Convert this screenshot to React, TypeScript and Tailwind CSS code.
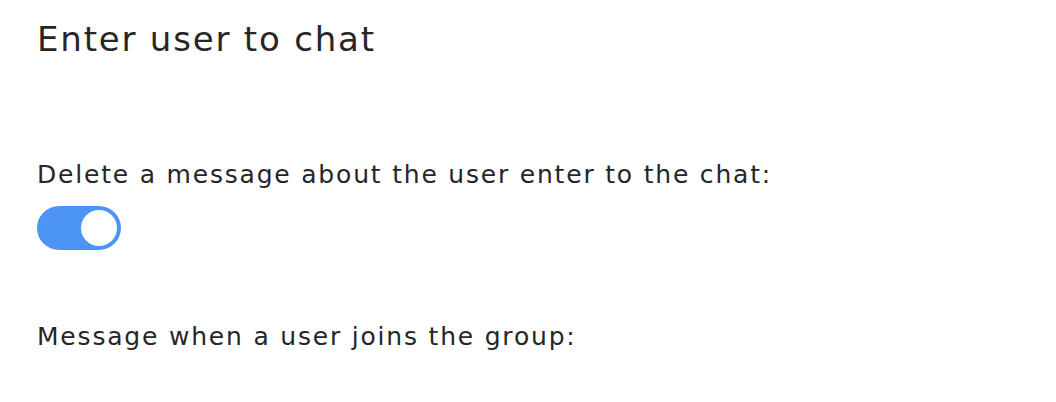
import { useState } from 'react';

function Toggle({ on, onChange }: { on: boolean; onChange: (v: boolean) => void }) {
  return (
    <button
      type="button"
      onClick={() => onChange(!on)}
      className={`relative flex h-[44px] w-[84px] items-center rounded-full px-[4px] ${on ? 'justify-end bg-[#4c94f5]' : 'justify-start bg-[#d1d5db]'}`}
    >
      <span className="block h-[36px] w-[36px] rounded-full bg-white" />
    </button>
  );
}

export default function App() {
  const [deleteEnter, setDeleteEnter] = useState(true);

  return (
    <div className="min-h-[402px] w-[1056px] bg-white pl-[37px] pt-[14px] text-[#262626] font-['DejaVu_Sans',sans-serif]">
      <h1 className="text-[34px] leading-[50px] tracking-[1.8px]">Enter user to chat</h1>

      <div className="mt-[93px] flex flex-col items-start gap-[13px]">
        <label className="text-[25px] leading-[36px] tracking-[1.8px]">
          Delete a message about the user enter to the chat:
        </label>
        <Toggle on={deleteEnter} onChange={setDeleteEnter} />
      </div>

      <div className="mt-[69px]">
        <label className="text-[25px] leading-[36px] tracking-[1.8px]">
          Message when a user joins the group:
        </label>
      </div>
    </div>
  );
}
